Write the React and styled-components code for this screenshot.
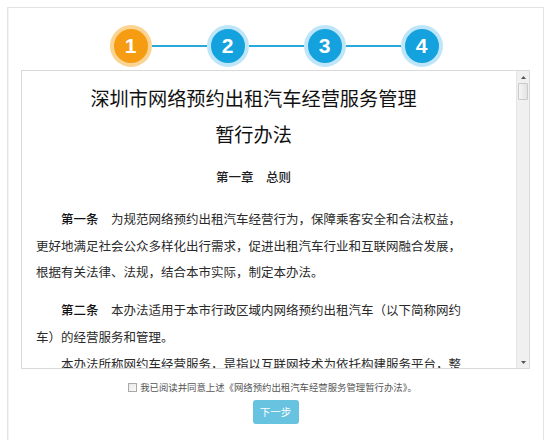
import React from "react";
import styled, { createGlobalStyle } from "styled-components";

const Global = createGlobalStyle`
  html, body { margin: 0; padding: 0; background: #fff; height: 100%; overflow: hidden; }
  body { font-family: "Noto Sans CJK SC", "Noto Sans", sans-serif; }
`;

const Panel = styled.div`
  margin: 7px 9px 0 7px;
  height: calc(100vh - 7px);
  border: 1px solid #e3e3e3;
  border-bottom: none;
  box-shadow: inset 1px 0 0 #f4f4f4;
  padding-top: 16px;
  box-sizing: border-box;
  display: flex;
  flex-direction: column;
  align-items: stretch;
`;

const Steps = styled.div`
  display: flex;
  justify-content: center;
  align-items: center;
  height: 43px;
  margin-left: 1px;
`;

const Step = styled.div`
  width: 34px;
  height: 34px;
  border-radius: 50%;
  background: ${(p) => (p.$active ? "#f69c12" : "#14a2df")};
  border: 4px solid ${(p) => (p.$active ? "#fbd493" : "#bfe6f8")};
  color: #fff;
  font-family: "Liberation Sans", Arial, sans-serif;
  font-weight: bold;
  font-size: 21px;
  display: flex;
  align-items: center;
  justify-content: center;
  flex: none;
`;

const Connector = styled.div`
  width: 55px;
  height: 2px;
  background: #29a8de;
  flex: none;
`;

const Box = styled.div`
  margin: 3px 13px 0 13px;
  height: 297px;
  flex: none;
  border: 1px solid #d9d9d9;
  display: flex;
  overflow: hidden;
`;

const Content = styled.div`
  flex: 1;
  overflow: hidden;
  padding: 9px 45px 0 14px;
  color: #2a2a2a;
`;

const Title = styled.h1`
  margin: 0;
  text-align: center;
  font-size: 19.2px;
  line-height: 36px;
  font-weight: 400;
  color: #111;
`;

const Chapter = styled.h2`
  margin: 12px 0 0;
  text-align: center;
  font-size: 12.5px;
  line-height: 26px;
  font-weight: 500;
  color: #1e1e1e;
`;

const Para = styled.p`
  margin: ${(p) => p.$top}px 0 0;
  font-size: 12.5px;
  line-height: 26.5px;
  text-indent: 2em;
  width: 436px;
`;

const Strong = styled.span`
  font-weight: 500;
  color: #111;
`;

const Scrollbar = styled.div`
  width: 12px;
  flex: none;
  background: #f0f0f0;
  border-left: 1px solid #e6e6e6;
  display: flex;
  flex-direction: column;
  align-items: center;
`;

const Arrow = styled.div`
  height: 12px;
  width: 100%;
  display: flex;
  align-items: center;
  justify-content: center;
`;

const Thumb = styled.div`
  width: 10px;
  height: 17px;
  box-sizing: border-box;
  border: 1px solid #c9c9c9;
  background: linear-gradient(90deg, #f6f6f6, #e3e3e3);
  border-radius: 1px;
`;

const Track = styled.div`
  flex: 1;
`;

const AgreeRow = styled.label`
  margin-top: 10px;
  display: flex;
  justify-content: center;
  align-items: center;
  gap: 3px;
  font-size: 9.4px;
  line-height: 16px;
  color: #555;
  margin-right: 6px;
`;

const Check = styled.span`
  width: 7px;
  height: 7px;
  border: 1px solid #a9a9a9;
  background: linear-gradient(135deg, #e8e8e8, #fafafa);
  flex: none;
`;

const Actions = styled.div`
  margin-top: 5px;
  display: flex;
  justify-content: center;
`;

const NextButton = styled.button`
  width: 46px;
  height: 24px;
  border: none;
  border-radius: 3px;
  background: #67c3e0;
  color: #fff;
  font-family: "Noto Sans CJK SC", sans-serif;
  font-size: 10.5px;
  line-height: 24px;
  padding: 0;
  cursor: not-allowed;
`;

const Tri = ({ up }) => (
  <svg width="5" height="3" viewBox="0 0 5 3">
    <polygon points={up ? "2.5,0 5,3 0,3" : "0,0 5,0 2.5,3"} fill="#555" />
  </svg>
);

export default function App() {
  return (
    <>
      <Global />
      <Panel>
        <Steps>
          <Step $active>1</Step>
          <Connector />
          <Step>2</Step>
          <Connector />
          <Step>3</Step>
          <Connector />
          <Step>4</Step>
        </Steps>
        <Box>
          <Content>
            <Title>
              深圳市网络预约出租汽车经营服务管理
              <br />
              暂行办法
            </Title>
            <Chapter>第一章　总则</Chapter>
            <Para $top={16}>
              <Strong>第一条</Strong>　为规范网络预约出租汽车经营行为，保障乘客安全和合法权益，更好地满足社会公众多样化出行需求，促进出租汽车行业和互联网融合发展，根据有关法律、法规，结合本市实际，制定本办法。
            </Para>
            <Para $top={11.5}>
              <Strong>第二条</Strong>　本办法适用于本市行政区域内网络预约出租汽车（以下简称网约车）的经营服务和管理。
            </Para>
            <Para $top={1}>
              本办法所称网约车经营服务，是指以互联网技术为依托构建服务平台，整合供需信息，使用符合条件的车辆和驾驶员，提供非巡游的预约出租汽车服务的经营活动。
            </Para>
          </Content>
          <Scrollbar>
            <Arrow>
              <Tri up />
            </Arrow>
            <Thumb />
            <Track />
            <Arrow>
              <Tri />
            </Arrow>
          </Scrollbar>
        </Box>
        <AgreeRow>
          <Check />
          我已阅读并同意上述《网络预约出租汽车经营服务管理暂行办法》。
        </AgreeRow>
        <Actions>
          <NextButton disabled>下一步</NextButton>
        </Actions>
      </Panel>
    </>
  );
}
